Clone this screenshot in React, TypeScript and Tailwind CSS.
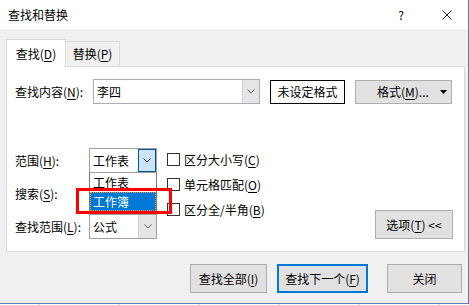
import React from 'react';

function Key({ c }: { c: string }) {
  return <span className="underline underline-offset-2 decoration-1">{c}</span>;
}

function Chevron({ color = '#606060' }: { color?: string }) {
  return (
    <svg width="8" height="5" viewBox="0 0 8 5">
      <path d="M0.5 0.5 L4 4 L7.5 0.5" fill="none" stroke={color} strokeWidth="1" />
    </svg>
  );
}

function Check({ children }: { children: React.ReactNode }) {
  return (
    <div className="flex items-center h-[13px]">
      <div className="w-[13px] h-[13px] border border-[#333333] bg-white shrink-0" />
      <span className="ml-[4px] whitespace-nowrap leading-none">{children}</span>
    </div>
  );
}

function Btn({ w, primary, children }: { w: string; primary?: boolean; children: React.ReactNode }) {
  return (
    <div
      className={
        primary
          ? `${w} h-[29px] bg-[#e1e1e1] border-2 border-[#0078d7] flex items-center justify-center`
          : `${w} h-[29px] bg-[#e1e1e1] border border-[#adadad] flex items-center justify-center`
      }
    >
      {children}
    </div>
  );
}

export default function App() {
  return (
    <div className="w-[469px] h-[305px] bg-white overflow-hidden relative font-['Noto_Sans_CJK_SC','Noto_Sans',sans-serif] text-[12px] text-black">
      <div className="w-[469px] h-[304px] bg-[#f0f0f0] border-r border-b border-[#5b7db2] flex flex-col">
        {/* title bar */}
        <div className="h-[29px] bg-white flex items-center pl-[8px] shrink-0">
          <span className="text-[12px]">查找和替换</span>
          <span className="ml-auto mr-[38px] text-[12px]">?</span>
          <svg width="10" height="10" viewBox="0 0 10 10" className="mr-[16px]">
            <path d="M0.5 0.5 L9.5 9.5 M9.5 0.5 L0.5 9.5" stroke="#222" strokeWidth="1" />
          </svg>
        </div>

        <div className="flex-1 pl-[6px] pr-[3px] pt-[10px]">
          {/* tabs */}
          <div className="flex items-end h-[28px] -mb-px relative z-10">
            <div className="w-[60px] h-[28px] bg-white border border-b-0 border-[#d9d9d9] flex items-center justify-center">
              <span>查找(<Key c="D" />)</span>
            </div>
            <div className="w-[54px] h-[26px] bg-[#f0f0f0] border border-l-0 border-[#d9d9d9] flex items-center justify-center">
              <span>替换(<Key c="P" />)</span>
            </div>
          </div>

          {/* panel */}
          <div className="w-[459px] h-[186px] bg-white border border-[#d9d9d9] pl-[8px] pt-[12px]">
            <div className="flex items-center h-[25px]">
              <span className="w-[78px] whitespace-nowrap">查找内容(<Key c="N" />):</span>
              <div className="w-[167px] h-[25px] border border-[#abadb3] bg-white flex">
                <span className="flex-1 pl-[3px] flex items-center">李四</span>
                <div className="w-[17px] h-full bg-[#e5e5e5] border-l border-[#d0d0d0] flex items-center justify-center">
                  <Chevron />
                </div>
              </div>
              <div className="ml-[10px] w-[75px] h-[24px] border border-black bg-white flex items-center justify-center">
                未设定格式
              </div>
              <div className="ml-[10px] w-[97px] h-[24px] bg-[#e1e1e1] border border-[#adadad] flex items-center pl-[21px]">
                <span>格式(<Key c="M" />)...</span>
                <svg width="7" height="4" viewBox="0 0 7 4" className="ml-auto mr-[4px]">
                  <path d="M0 0 L7 0 L3.5 4 Z" fill="#000" />
                </svg>
              </div>
            </div>

            <div className="flex mt-[44px]">
              {/* labels + selects */}
              <div className="flex flex-col gap-[8px]">
                <div className="flex items-center h-[25px]">
                  <span className="w-[74px]">范围(<Key c="H" />):</span>
                  <div className="relative">
                    <div className="w-[68px] h-[25px] border border-[#a0a0a0] bg-white flex">
                      <span className="flex-1 pl-[3px] flex items-center">工作表</span>
                      <div className="w-[18px] h-full bg-[#cce4f7] border border-[#005499] flex items-center justify-center">
                        <Chevron color="#333" />
                      </div>
                    </div>
                    <div className="absolute left-0 top-[25px] w-[68px] h-[39px] bg-white border border-t-0 border-[#7a7a7a] z-20">
                      <div className="h-[19px] pl-[3px] flex items-center">工作表</div>
                      <div className="h-[19px] bg-[#0078d7] text-white pl-[2px] flex items-center border border-dotted border-[#f0a030]">
                        工作簿
                      </div>
                    </div>
                  </div>
                </div>
                <div className="flex items-center h-[25px]">
                  <span className="w-[74px]">搜索(<Key c="S" />):</span>
                  <div className="w-[68px] h-[25px] border border-[#a0a0a0] bg-white" />
                </div>
                <div className="flex items-center h-[25px]">
                  <span className="w-[74px] whitespace-nowrap">查找范围(<Key c="L" />):</span>
                  <div className="w-[68px] h-[25px] border border-[#a0a0a0] bg-white flex">
                    <span className="flex-1 pl-[3px] flex items-center">公式</span>
                    <div className="w-[18px] h-full bg-[#e5e5e5] border-l border-[#d0d0d0] flex items-center justify-center">
                      <Chevron />
                    </div>
                  </div>
                </div>
              </div>

              {/* checkboxes */}
              <div className="ml-[10px] pt-[5px] flex flex-col gap-[12px]">
                <Check>区分大小写(<Key c="C" />)</Check>
                <Check>单元格匹配(<Key c="O" />)</Check>
                <Check>区分全/半角(<Key c="B" />)</Check>
              </div>

              <div className="ml-auto mr-[11px] self-end">
                <Btn w="w-[78px]">
                  <span>选项(<Key c="T" />) &lt;&lt;</span>
                </Btn>
              </div>
            </div>
          </div>

          {/* bottom buttons */}
          <div className="flex justify-end mt-[12px] pr-[3px]">
            <Btn w="w-[77px]">
              <span>查找全部(<Key c="I" />)</span>
            </Btn>
            <div className="ml-[10px]">
              <Btn w="w-[91px]" primary>
                <span>查找下一个(<Key c="F" />)</span>
              </Btn>
            </div>
            <div className="ml-[19px]">
              <Btn w="w-[75px]">关闭</Btn>
            </div>
          </div>
        </div>
      </div>

      {/* sheet grid peeking below */}
      <div className="flex h-[1px]">
        <div className="w-[40px] border-r border-[#d4d4d4]" />
        <div className="w-[80px] border-r border-[#d4d4d4]" />
        <div className="w-[80px] border-r border-[#d4d4d4]" />
        <div className="w-[80px] border-r border-[#d4d4d4]" />
        <div className="w-[80px] border-r border-[#d4d4d4]" />
        <div className="w-[80px] border-r border-[#d4d4d4]" />
      </div>

      {/* red annotation box */}
      <div className="absolute left-[76px] top-[188px] w-[96px] h-[26px] border-[3px] border-[#ff0000] z-30" />
    </div>
  );
}
